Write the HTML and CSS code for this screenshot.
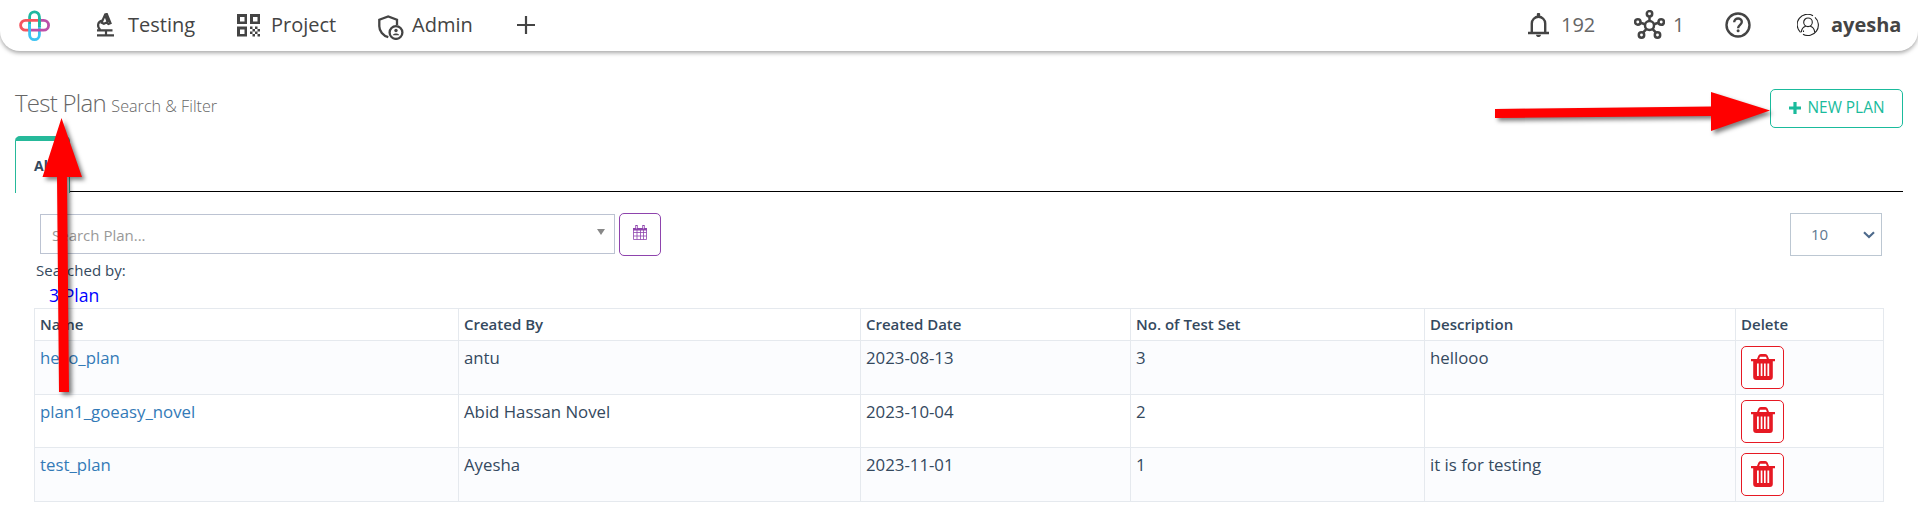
FILE: index.html
```html
<!DOCTYPE html>
<html lang="en">
<head>
<meta charset="utf-8">
<title>Test Plan</title>
<link rel="stylesheet" href="styles.css">
</head>
<body>
<header class="topbar">
  <a class="logo"><svg width="31" height="31" viewBox="0 0 31 31" fill="none" stroke-width="2.8">
    <path d="M20.4 15V6.8a4.9 4.9 0 0 0-9.8 0V20" stroke="#1fb8a0"/>
    <path d="M11 20.2H6.5a4.9 4.9 0 0 1 0-9.8H20" stroke="#f5555f"/>
    <path d="M10.6 14V24.7a4.9 4.9 0 0 0 9.8 0V16" stroke="#3cc3f2"/>
    <path d="M20 10.4h4.7a4.9 4.9 0 0 1 0 9.8H12" stroke="#bb4fa8"/>
    <path d="M20.4 17V8" stroke="#1fb8a0"/>
  </svg></a>
  <nav class="nav">
    <a class="nav-testing"><svg width="19" height="24" viewBox="0 0 19 24" fill="none" stroke="#444" stroke-width="2.2">
      <path d="M1 22.300h17M10 22v-4.200M1 17.400h15.500"/><path d="M4.300 17C.8 13.500 1.500 8.800 6 7.600"/><path d="M5.600 9.600 9.200 1.500l1.600-.5 3.700 9.200-2.100.8-1.800-1.500-2.700 1.200zM9.500 3l2.400 6.500"/>
    </svg><span>Testing</span></a>
    <a class="nav-project"><svg width="23" height="23" viewBox="0 0 23 23" fill="#444">
      <path fill-rule="evenodd" d="M0 0h10v10H0zM3 3v4.500h4.500V3zM13 0h10v10H13zM16 3v4.500h4.500V3zM0 12.500h10v10H0zM3 15.500V20h4.500v-4.500z"/>
      <path d="M13 12.500h2.500V15H13zM18 12.500h2.500V15H18zM15.500 15H18v2.500h-2.500zM20.500 15H23v2.500h-2.500zM13 17.500h2.500V20H13zM18 17.500h2.500V20H18zM15.500 20H18v2.500h-2.500zM20.500 20H23v2.500h-2.500z"/>
    </svg><span>Project</span></a>
    <a class="nav-admin"><svg width="26" height="25" viewBox="0 0 26 25" fill="none" stroke="#444" stroke-width="2.300">
      <path d="M19 10V4.700L10.200 1.400 1.300 4.700v6.500c0 5 3.700 9.600 9 11"/><circle cx="18" cy="17.500" r="6.400"/><circle cx="18" cy="15.500" r="1.700" fill="#444" stroke="none"/><path d="M14.600 20.200c1-2.200 5.800-2.200 6.800 0z" fill="#444" stroke="none"/>
    </svg><span>Admin</span></a>
    <a class="nav-add"><svg width="18" height="18" viewBox="0 0 18 18"><path d="M9 0v18M0 9h18" stroke="#444" stroke-width="2.200"/></svg></a>
  </nav>
  <div class="account">
    <a class="acc-bell"><svg width="21" height="24" viewBox="0 0 21 24" fill="none" stroke="#444" stroke-width="2.400">
      <path d="M0 20h21M3.800 20V10.500a6.700 6.700 0 0 1 13.400 0V20"/><path d="M8 21.800h5c0 3-5 3-5 0zM8.800 3.500v-2a1.700 1.700 0 0 1 3.400 0v2z" fill="#444" stroke="none"/>
    </svg><span>192</span></a>
    <a class="acc-hub"><svg width="31" height="29" viewBox="0 0 31 29" fill="none" stroke="#444" stroke-width="2.500">
      <circle cx="15.500" cy="15.500" r="4.500"/><circle cx="15.500" cy="3.800" r="2.700"/><circle cx="3.800" cy="12" r="2.700"/><circle cx="27.200" cy="12" r="2.700"/><circle cx="7.500" cy="25" r="2.700"/><circle cx="23.500" cy="25" r="2.700"/>
      <path d="M15.500 6.500V11M6.500 12.700l4.600 1.500M24.500 12.700l-4.600 1.500M9 22.700l3.600-3.900M22 22.700l-3.600-3.900"/>
    </svg><span>1</span></a>
    <a class="acc-help"><svg width="26" height="26" viewBox="0 0 26 26" fill="none" stroke="#444" stroke-width="2.400">
      <circle cx="13" cy="13" r="11.500"/><path d="M9.200 10.300C9.300 5 17 5.600 16.800 10c-.1 2.800-3.700 3-3.700 6.300"/><circle cx="13.100" cy="18.800" r="1.500" fill="#444" stroke="none"/>
    </svg></a>
    <a class="acc-user"><svg width="22" height="22" viewBox="0 0 22 22" fill="none" stroke="#222" stroke-width="1.100">
      <path d="M16 1.800A10.400 10.400 0 0 0 3.500 18.300M18 3.400a10.400 10.400 0 0 1-12 16.800"/><circle cx="11" cy="8.300" r="4.300"/><path d="M4.300 18.200c.3-3.300 2-5.400 4.500-6M13.200 12.200c2.500.6 4.200 2.700 4.500 6M6.500 16.500v1.500"/>
    </svg><b>ayesha</b></a>
  </div>
</header>
<main class="page">
  <div class="page-head">
    <h1>Test Plan <small>Search &amp; Filter</small></h1>
    <button class="new-plan"><svg width="12" height="12" viewBox="0 0 12 12"><path d="M6 0v12M0 6h12" stroke="#1abb9c" stroke-width="3.200"/></svg><span>NEW PLAN</span></button>
  </div>
  <div class="tabs"><a class="tab">All</a><i class="tab-line"></i></div>
  <div class="filters">
    <div class="search"><span>Search Plan...</span><svg width="8" height="6" viewBox="0 0 8 6"><path d="M0 0h8L4 6z" fill="#888"/></svg></div>
    <button class="date"><svg width="14" height="15" viewBox="0 0 14 15" fill="none" stroke="#8e44ad">
      <path d="M.5 3.500h13v11H.5zM.5 7.500h13M.5 11h13M4 5v9.500M7.500 5v9.500M10.500 5v9.500" stroke-width=".8"/><path d="M0 3h14v2.500H0z" fill="#8e44ad" stroke="none"/><path d="M3.500 0v4M10.500 0v4" stroke-width="2.400"/><path d="M3.500 1v2.500M10.500 1v2.500" stroke="#fff" stroke-width=".8"/>
    </svg></button>
    <div class="page-size"><span>10</span><svg width="12" height="8" viewBox="0 0 12 8"><path d="M1 1.200 6 6l5-4.800" fill="none" stroke="#4d6a8c" stroke-width="2.100"/></svg></div>
  </div>
  <p class="searched">Searched by:</p>
  <p class="count">3 Plan</p>
  <table class="plans">
    <colgroup><col class="c-name"><col class="c-by"><col class="c-date"><col class="c-sets"><col class="c-desc"><col class="c-del"></colgroup>
    <thead><tr><th>Name</th><th>Created By</th><th>Created Date</th><th>No. of Test Set</th><th>Description</th><th>Delete</th></tr></thead>
    <tbody>
      <tr class="odd"><td><a>hello_plan</a></td><td>antu</td><td>2023-08-13</td><td>3</td><td>hellooo</td><td><button class="del"><svg width="24" height="26" viewBox="0 0 24 26"><use href="#trash"/></svg></button></td></tr>
      <tr class="even"><td><a>plan1_goeasy_novel</a></td><td>Abid Hassan Novel</td><td>2023-10-04</td><td>2</td><td></td><td><button class="del"><svg width="24" height="26" viewBox="0 0 24 26"><use href="#trash"/></svg></button></td></tr>
      <tr class="odd"><td><a>test_plan</a></td><td>Ayesha</td><td>2023-11-01</td><td>1</td><td>it is for testing</td><td><button class="del"><svg width="24" height="26" viewBox="0 0 24 26"><use href="#trash"/></svg></button></td></tr>
    </tbody>
  </table>
</main>
<svg class="arrows" width="1918" height="505" viewBox="0 0 1918 505">
  <defs><g id="trash"><path fill="#e61923" fill-rule="evenodd" d="M0 5h6l1.300-3.200Q8 0 9.800 0h4.400Q16 0 16.700 1.800L18 5h6v2.200h-2.200V23q0 3-3 3H5.200q-3 0-3-3V7.200H0zM8.200 5h7.600l-.8-2.300H9zM6 9.500V22h1.800V9.500zM9.700 9.500V22h1.700V9.500zM13 9.500V22h1.700V9.500zM16.400 9.500V22h1.800V9.500z"/></g></defs>
  <path d="M61.500 118 82 177H67l2 215H59L57 177H42.500z"/>
  <path d="M1770 110.500 1711 131v-15l-216 2v-9l216-2.500V92z"/>
</svg>
</body>
</html>
```

FILE: styles.css
```css
* { box-sizing: border-box; }
body { margin: 0; background: #fff; color: #34495e; font: 16px/24px "Open Sans", sans-serif; overflow: hidden; }
svg { display: block; flex: none; }
button { background: #fff; font: inherit; padding: 0; cursor: pointer; }
.topbar { height: 51px; display: flex; align-items: center; padding: 0 20px 0 19px; border-radius: 0 0 20px 20px; box-shadow: 0 2px 4px rgba(0, 0, 0, .35); color: #444; font-size: 20px; line-height: 28px; }
.topbar span, .topbar b { padding-bottom: 2px; }
.logo { width: 77px; }
.nav, .account, .nav a, .account a { display: flex; align-items: center; white-space: nowrap; }
.nav a { color: #444; }
.nav svg, .account svg { margin-top: -1px; }
.nav-testing { width: 141px; gap: 13px; }
.nav-project { width: 141px; gap: 11px; }
.nav-admin { width: 139px; gap: 8px; }
.nav .nav-admin svg { margin-top: 3px; }
.account { margin-left: auto; }
.acc-bell { width: 106px; gap: 12px; }
.acc-hub { width: 91px; gap: 8px; }
.account .acc-hub svg { margin-top: -3px; }
.acc-help { width: 72px; }
.acc-user { width: 101px; gap: 12px; }
.acc-bell span, .acc-hub span { color: #666; }
.page { padding: 0 15px; }
.page-head { display: flex; justify-content: space-between; padding-top: 38px; height: 85px; }
h1 { margin: -1px 0 0; font-size: 24px; line-height: 30px; font-weight: 300; letter-spacing: -.75px; color: #666; }
h1 small { font-size: 16.2px; letter-spacing: 0; }
.new-plan { width: 133px; height: 39px; border: 1px solid #1abb9c; border-radius: 5px; color: #1abb9c; font-size: 15.4px; display: flex; align-items: center; justify-content: center; gap: 7px; padding-bottom: 2px; }
.tabs { display: flex; height: 57px; }
.tab { width: 55px; border: 1px solid #26b99a; border-top-width: 5px; border-bottom: 0; border-radius: 5px 5px 0 0; font-size: 14px; font-weight: 700; padding: 13px 0 0 18px; }
.tab-line { flex: 1; height: 56px; border-bottom: 1px solid #000; }
.filters { display: flex; padding: 20px 21px 0 25px; height: 65px; }
.search { width: 575px; height: 40px; margin-top: 1px; border: 1px solid #bcc3d2; padding: 0 9px 0 11px; display: flex; align-items: center; justify-content: space-between; font-size: 15px; color: #999; }
.search span { padding-top: 2px; }
.search svg { margin-top: -4px; }
.date { width: 42px; height: 43px; margin-left: 4px; border: 1px solid #8e44ad; border-radius: 5px; display: flex; align-items: center; justify-content: center; padding-bottom: 4px; }
.page-size { width: 92px; height: 43px; margin-left: auto; border: 1px solid #bcc7d2; display: flex; align-items: center; justify-content: space-between; padding: 0 6px 0 20px; font-size: 15px; color: #607890; }
.page-size span { padding-bottom: 1px; }
.searched, .count { margin: 0; }
.searched { padding-left: 21px; font-size: 15px; }
.count { padding: 1px 0 0 34px; height: 26px; font-size: 17.6px; color: #00f; }
.plans { margin-left: 19px; width: 1849px; table-layout: fixed; border-collapse: collapse; }
.c-name { width: 424px; }
.c-by { width: 402px; }
.c-date { width: 270px; }
.c-sets { width: 294px; }
.c-desc { width: 311px; }
.c-del { width: 148px; }
th, td { border: 1px solid #e5e9ee; padding: 5px; text-align: left; vertical-align: top; }
th { height: 32px; padding: 4px 5px; font-size: 15px; line-height: 23px; font-weight: 600; }
td { height: 53.67px; padding-bottom: 4px; font-size: 16.8px; }
.plans .odd { background: #fbfcfe; }
.plans a { color: #337ab7; }
.del { width: 43px; height: 43px; display: flex; align-items: center; justify-content: center; border: 1px solid #e61923; border-radius: 5px; padding-bottom: 2px; }
.arrows { position: absolute; left: 0; top: 0; pointer-events: none; fill: #f00; filter: drop-shadow(3px 3px 2px rgba(0, 0, 0, .5)); }
```
